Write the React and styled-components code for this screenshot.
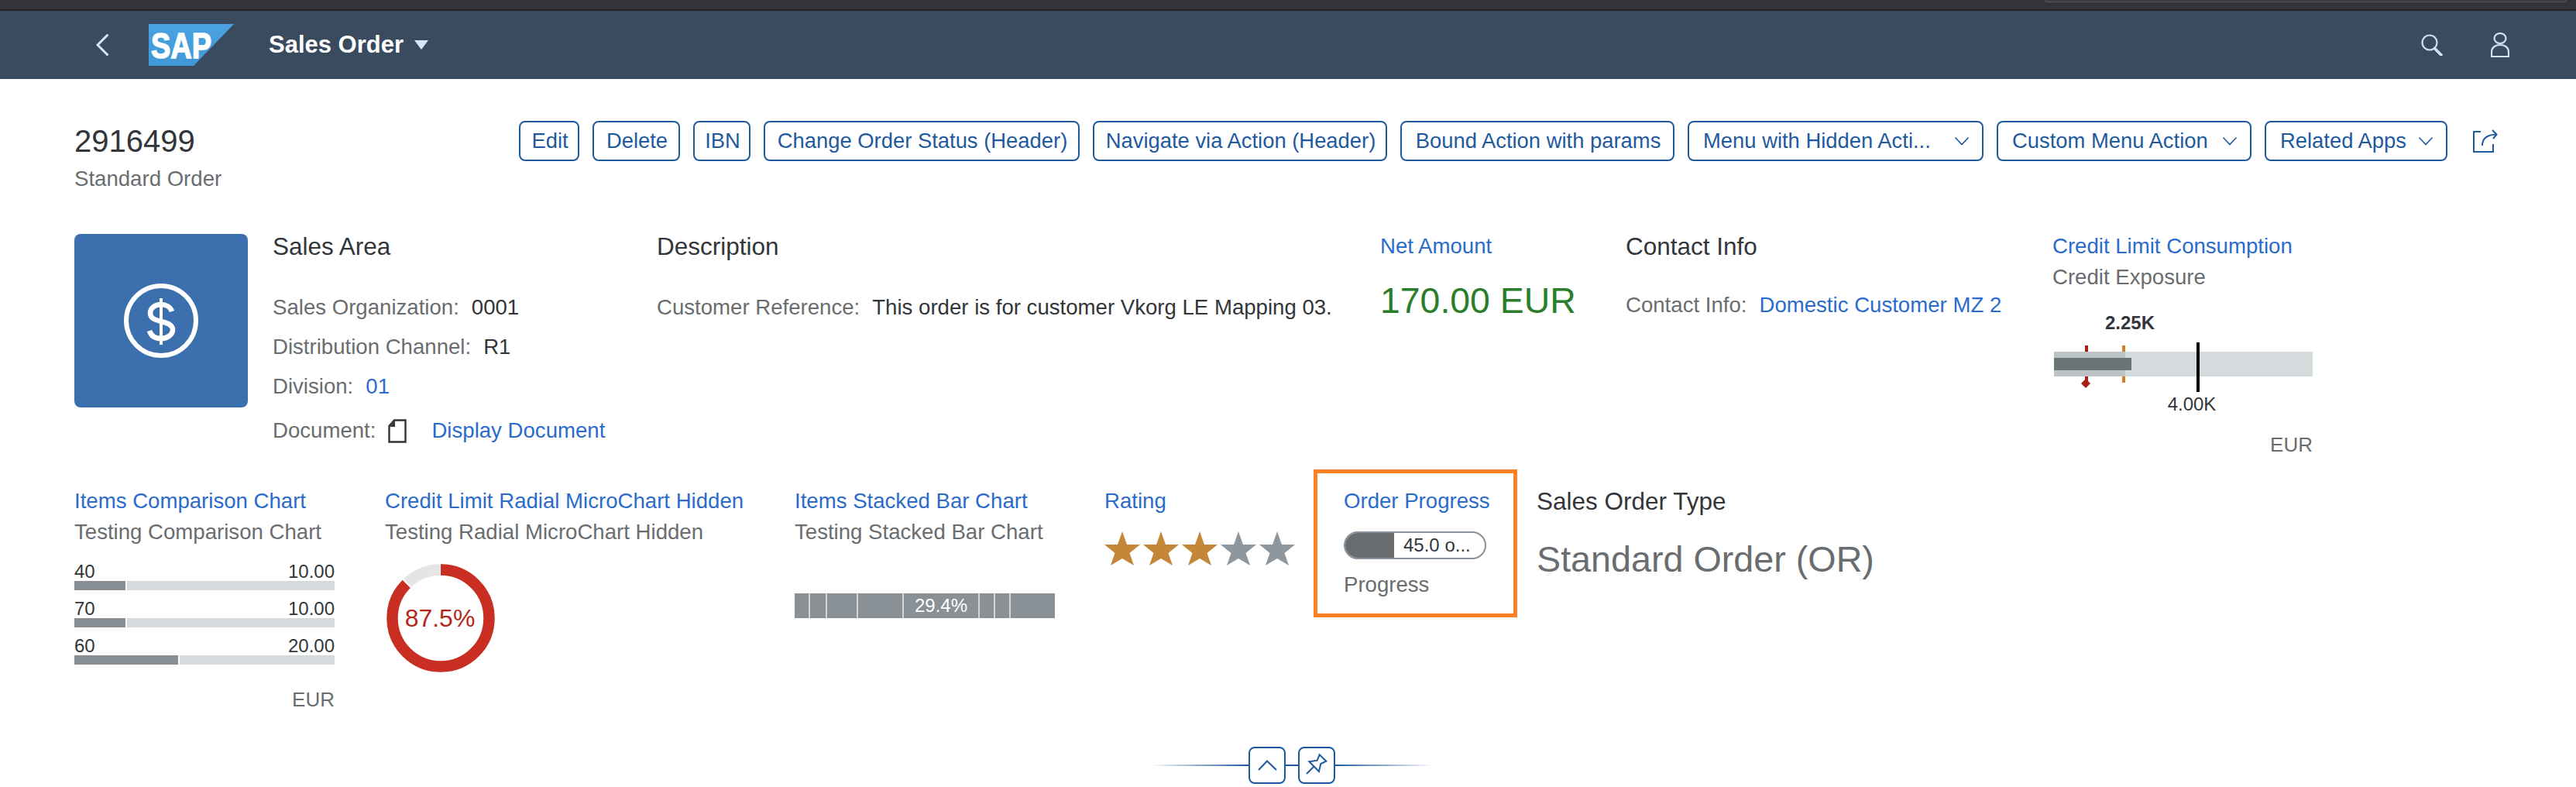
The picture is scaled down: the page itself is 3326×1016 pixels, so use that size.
import React from "react";
import styled, { createGlobalStyle } from "styled-components";

const GlobalStyle = createGlobalStyle`
  html, body {
    margin: 0;
    padding: 0;
    background: #fff;
    overflow: hidden;
  }
  body {
    font-family: "Liberation Sans", Arial, sans-serif;
    color: #32363a;
  }
`;

const Page = styled.div`
  width: 3326px;
  height: 1016px;
  overflow: hidden;
`;

const WindowEdge = styled.div`
  height: 14px;
  box-sizing: border-box;
  background: #333437;
  border-bottom: 2px solid #232427;
  display: flex;
  justify-content: flex-end;
  padding-right: 12px;
`;

const AddressBarEdge = styled.div`
  width: 674px;
  height: 3px;
  box-sizing: border-box;
  background: #3c3d41;
  border: 1px solid #55565a;
  border-top: 0;
  border-radius: 0 0 5px 5px;
`;

const Shell = styled.header`
  height: 88px;
  background: #3a4a5f;
  display: flex;
  align-items: center;
  padding: 0 86px 0 124px;
`;

const ShellTitle = styled.div`
  margin-left: 45px;
  font-size: 31px;
  font-weight: 700;
  color: #fff;
`;

const ShellCaret = styled.div`
  margin-left: 14px;
  width: 0;
  height: 0;
  border-left: 9px solid transparent;
  border-right: 9px solid transparent;
  border-top: 12px solid #d1e8ff;
`;

const ShellActions = styled.div`
  margin-left: auto;
  display: flex;
  align-items: center;
  gap: 62px;
`;

const Content = styled.main`
  padding: 54px 101px 0 96px;
`;

const TitleRow = styled.div`
  height: 142px;
  display: flex;
  justify-content: space-between;
  align-items: flex-start;
`;

const ObjectTitle = styled.div`
  font-size: 40px;
  line-height: 52px;
  color: #32363a;
`;

const ObjectSubtitle = styled.div`
  font-size: 27.6px;
  line-height: 36px;
  margin-top: 5px;
  color: #6a6d70;
`;

const Actions = styled.div`
  display: flex;
  align-items: center;
  gap: 17px;
`;

const ActionButton = styled.div`
  box-sizing: border-box;
  width: ${(p) => p.$w}px;
  height: 52px;
  padding: 0 16px 0 18px;
  display: flex;
  align-items: center;
  justify-content: ${(p) => (p.$menu ? "space-between" : "center")};
  border: 2px solid #1f5a9e;
  border-radius: 8px;
  color: #1f5a9e;
  font-size: 27.4px;
  white-space: nowrap;
`;

const ShareLink = styled.div`
  margin-left: 16px;
  display: flex;
`;

const HeaderFacets = styled.div`
  height: 308px;
  display: flex;
  align-items: flex-start;
`;

const Tile = styled.div`
  width: 224px;
  height: 224px;
  margin: 4px 32px 0 0;
  flex: none;
  background: #3c6fae;
  border-radius: 8px;
  display: flex;
  align-items: center;
  justify-content: center;
`;

const Facet = styled.section`
  width: ${(p) => p.$w}px;
  flex: none;
`;

const GroupTitle = styled.div`
  font-size: 31.5px;
  line-height: 40px;
  color: #32363a;
  white-space: nowrap;
`;

const LinkTitle = styled.div`
  font-size: 27.6px;
  line-height: 40px;
  color: #2b6bcb;
  white-space: nowrap;
`;

const SubTitle = styled.div`
  font-size: 27.6px;
  line-height: 40px;
  color: #6a6d70;
  white-space: nowrap;
`;

const FieldList = styled.div`
  margin-top: ${(p) => p.$top || 39}px;
  display: flex;
  flex-direction: column;
  gap: 11px;
`;

const Field = styled.div`
  display: flex;
  align-items: center;
  gap: 16px;
  font-size: 27.6px;
  line-height: 40px;
  white-space: nowrap;
  margin-top: ${(p) => p.$top || 0}px;
`;

const Label = styled.span`
  color: #6a6d70;
`;

const Value = styled.span`
  color: #32363a;
`;

const FieldLink = styled.span`
  color: #2b6bcb;
  margin-left: ${(p) => p.$left || 0}px;
`;

const KpiValue = styled.div`
  margin-top: 20px;
  font-size: 46.4px;
  line-height: 60px;
  color: #2b7d2b;
  white-space: nowrap;
`;

const BulletChart = styled.svg`
  display: block;
  margin-top: 20px;
`;

const Unit = styled.div`
  margin-top: ${(p) => p.$top}px;
  width: ${(p) => p.$w}px;
  text-align: right;
  font-size: 26px;
  line-height: 36px;
  color: #6a6d70;
`;

const ChartRow = styled.div`
  display: flex;
  align-items: flex-start;
`;

const ChartFacet = styled.section`
  width: ${(p) => p.$w}px;
  flex: none;
  padding-top: 21px;
`;

const Comparison = styled.div`
  width: 336px;
  margin-top: 19px;
  display: flex;
  flex-direction: column;
  gap: 12px;
`;

const CompareLabels = styled.div`
  display: flex;
  justify-content: space-between;
  font-size: 24px;
  line-height: 24px;
  color: #32363a;
`;

const CompareTrack = styled.div`
  height: 12px;
  display: flex;
  gap: 2px;
`;

const CompareFill = styled.div`
  width: ${(p) => p.$w}px;
  background: #878f94;
`;

const CompareRest = styled.div`
  flex: 1;
  background: #d5dadd;
`;

const Radial = styled.svg`
  display: block;
  margin: 21px 0 0 2px;
`;

const StackedBar = styled.div`
  width: 336px;
  height: 32px;
  margin-top: 59px;
  display: flex;
  gap: 2px;
  background: #d5d5d5;
`;

const Segment = styled.div`
  width: ${(p) => p.$w}px;
  flex: none;
  background: #899196;
  color: #fff;
  font-size: 24px;
  line-height: 32px;
  text-align: center;
`;

const Stars = styled.div`
  margin-top: 19px;
  display: flex;
  gap: 4px;
`;

const HighlightBox = styled.section`
  box-sizing: border-box;
  width: 263px;
  height: 191px;
  flex: none;
  margin-right: 25px;
  padding: 16px 0 0 34px;
  border: 5px solid #fd7e23;
`;

const Progress = styled.div`
  box-sizing: border-box;
  width: 184px;
  height: 36px;
  margin-top: 19px;
  display: flex;
  border: 2px solid #89919a;
  border-radius: 18px;
  overflow: hidden;
`;

const ProgressFill = styled.div`
  width: 63px;
  background: #6a6d70;
`;

const ProgressText = styled.div`
  padding-left: 12px;
  font-size: 24px;
  line-height: 32px;
  color: #32363a;
  white-space: nowrap;
`;

const ProgressCaption = styled.div`
  margin-top: 15px;
  font-size: 27.6px;
  line-height: 36px;
  color: #6a6d70;
`;

const BigText = styled.div`
  margin-top: 25px;
  font-size: 46.7px;
  line-height: 60px;
  color: #6a6d70;
  white-space: nowrap;
`;

const Collapse = styled.div`
  margin-top: 43px;
  padding-left: 15px;
  display: flex;
  align-items: center;
  justify-content: center;
`;

const FadeLine = styled.div`
  width: 127px;
  height: 2px;
  background: linear-gradient(
    ${(p) => (p.$left ? "to right" : "to left")},
    rgba(31, 90, 158, 0),
    #1f5a9e
  );
`;

const Connector = styled.div`
  width: 16px;
  height: 2px;
  background: #1f5a9e;
`;

const SquareButton = styled.div`
  box-sizing: border-box;
  width: 48px;
  height: 48px;
  border: 2px solid #1f5a9e;
  border-radius: 8px;
  display: flex;
`;

const BackIcon = () => (
  <svg width="16" height="28" viewBox="0 0 16 28" fill="none">
    <path d="M14.5 1.5 2 14l12.5 12.5" stroke="#d1e8ff" strokeWidth="3" strokeLinecap="round" />
  </svg>
);

const SapLogo = () => (
  <svg width="110" height="54" viewBox="0 0 110 54" style={{ marginLeft: 52 }}>
    <defs>
      <linearGradient id="sapBlue" x1="0" y1="0" x2="0" y2="1">
        <stop offset="0" stopColor="#4aa3e0" />
        <stop offset="1" stopColor="#3f97d6" />
      </linearGradient>
    </defs>
    <polygon points="0,0 110,0 58,54 0,54" fill="url(#sapBlue)" />
    <text
      x="3"
      y="44"
      fontFamily="Liberation Sans"
      fontWeight="700"
      fontSize="46"
      fill="#fff"
      stroke="#fff"
      strokeWidth="1.5"
      textLength="78"
      lengthAdjust="spacingAndGlyphs"
    >
      SAP
    </text>
  </svg>
);

const SearchIcon = () => (
  <svg width="28" height="28" viewBox="0 0 28 28" fill="none" stroke="#d1e0f5">
    <ellipse cx="11" cy="11" rx="9.5" ry="9.5" strokeWidth="2.2" />
    <path d="M17.5 18.5 26 27" strokeWidth="3.6" strokeLinecap="round" />
  </svg>
);

const UserIcon = () => (
  <svg width="24" height="32" viewBox="0 0 24 32" fill="none" stroke="#d1e0f5" strokeWidth="2.2">
    <ellipse cx="12" cy="7.5" rx="7.5" ry="6.5" />
    <path d="M1 31V25C1 19 6 16 12 16S23 19 23 25V31Z" />
  </svg>
);

const ChevronDown = () => (
  <svg width="20" height="14" viewBox="0 0 20 14" fill="none">
    <path d="M1.5 2.5 10 11.5l8.5-9" stroke="#1f5a9e" strokeWidth="1.6" />
  </svg>
);

const ShareIcon = () => (
  <svg width="32" height="30" viewBox="0 0 32 30" fill="none" stroke="#1f5a9e" strokeWidth="2">
    <path d="M10 3H1v26h25V19" />
    <path d="M12 21C12 13 17 7 30 6.5" />
    <path d="M25 1l5.5 5.5L26 12" />
  </svg>
);

const DollarIcon = () => (
  <svg width="100" height="98" viewBox="0 0 100 98" fill="none" stroke="#fff">
    <ellipse cx="50" cy="49" rx="45" ry="45" strokeWidth="6" />
    <path d="M50 20v60" strokeWidth="4" />
    <path
      d="M64 37c-2-6-8-9-14-9-8 0-14 5-14 11 0 7 6 9 14 11s15 4 15 11c0 6-7 11-15 11-7 0-13-3-15-10"
      strokeWidth="6.5"
    />
  </svg>
);

const DocumentIcon = () => (
  <svg width="24" height="31" viewBox="0 0 24 31" fill="none" style={{ flex: "none" }}>
    <path d="M8 1.5H22.5V29.5H1.5V9Z" stroke="#32363a" strokeWidth="2.4" />
    <path d="M9 2V10H2Z" fill="#32363a" />
  </svg>
);

const Star = ({ on }) => (
  <svg width="46" height="44" viewBox="0 0 46 44">
    <polygon
      points="23,0 29,17 46,17 32.5,28 38,44 23,35 8,44 13.5,28 0,17 17,17"
      fill={on ? "#c4873a" : "#8e969e"}
    />
  </svg>
);

const actions = [
  { label: "Edit", w: 78 },
  { label: "Delete", w: 113 },
  { label: "IBN", w: 74 },
  { label: "Change Order Status (Header)", w: 408 },
  { label: "Navigate via Action (Header)", w: 380 },
  { label: "Bound Action with params", w: 354 },
  { label: "Menu with Hidden Acti...", w: 382, menu: true },
  { label: "Custom Menu Action", w: 329, menu: true },
  { label: "Related Apps", w: 236, menu: true },
];

const comparison = [
  { label: "40", value: "10.00", fill: 66 },
  { label: "70", value: "10.00", fill: 66 },
  { label: "60", value: "20.00", fill: 134 },
];

const segments = [18, 20, 38, 57, 96, 18, 18, 57];

const App = () => (
  <Page>
    <GlobalStyle />
    <WindowEdge>
      <AddressBarEdge />
    </WindowEdge>
    <Shell>
      <BackIcon />
      <SapLogo />
      <ShellTitle>Sales Order</ShellTitle>
      <ShellCaret />
      <ShellActions>
        <SearchIcon />
        <UserIcon />
      </ShellActions>
    </Shell>
    <Content>
      <TitleRow>
        <div>
          <ObjectTitle>2916499</ObjectTitle>
          <ObjectSubtitle>Standard Order</ObjectSubtitle>
        </div>
        <Actions>
          {actions.map((a) => (
            <ActionButton key={a.label} $w={a.w} $menu={a.menu}>
              {a.label}
              {a.menu && <ChevronDown />}
            </ActionButton>
          ))}
          <ShareLink>
            <ShareIcon />
          </ShareLink>
        </Actions>
      </TitleRow>

      <HeaderFacets>
        <Tile>
          <DollarIcon />
        </Tile>
        <Facet $w={496}>
          <GroupTitle>Sales Area</GroupTitle>
          <FieldList>
            <Field>
              <Label>Sales Organization:</Label>
              <Value>0001</Value>
            </Field>
            <Field>
              <Label>Distribution Channel:</Label>
              <Value>R1</Value>
            </Field>
            <Field>
              <Label>Division:</Label>
              <FieldLink>01</FieldLink>
            </Field>
            <Field $top={6}>
              <Label>Document:</Label>
              <DocumentIcon />
              <FieldLink $left={16}>Display Document</FieldLink>
            </Field>
          </FieldList>
        </Facet>
        <Facet $w={934}>
          <GroupTitle>Description</GroupTitle>
          <FieldList>
            <Field>
              <Label>Customer Reference:</Label>
              <Value>This order is for customer Vkorg LE Mapping 03.</Value>
            </Field>
          </FieldList>
        </Facet>
        <Facet $w={317}>
          <LinkTitle>Net Amount</LinkTitle>
          <KpiValue>170.00 EUR</KpiValue>
        </Facet>
        <Facet $w={551}>
          <GroupTitle>Contact Info</GroupTitle>
          <FieldList $top={36}>
            <Field>
              <Label>Contact Info:</Label>
              <FieldLink>Domestic Customer MZ 2</FieldLink>
            </Field>
          </FieldList>
        </Facet>
        <Facet $w={340}>
          <LinkTitle>Credit Limit Consumption</LinkTitle>
          <SubTitle>Credit Exposure</SubTitle>
          <BulletChart width="340" height="142" viewBox="0 0 340 142">
            <rect x="2" y="56" width="334" height="32" fill="#d5dadd" />
            <rect x="2" y="56" width="92" height="32" fill="#bcc3c7" />
            <rect x="2" y="64" width="100" height="16" fill="#6a7578" />
            <rect x="42" y="48" width="4" height="8" fill="#a82015" />
            <rect x="42" y="88" width="4" height="8" fill="#a82015" />
            <polygon points="43,91 49,97 43,103 37,97" fill="#a82015" />
            <rect x="90" y="48" width="4" height="8" fill="#d97b2f" />
            <rect x="90" y="88" width="4" height="8" fill="#d97b2f" />
            <rect x="186" y="44" width="4" height="64" fill="#000" />
            <text x="100" y="27" textAnchor="middle" fontFamily="Liberation Sans" fontWeight="700" fontSize="24" fill="#32363a">
              2.25K
            </text>
            <text x="180" y="132" textAnchor="middle" fontFamily="Liberation Sans" fontSize="24" fill="#32363a">
              4.00K
            </text>
          </BulletChart>
          <Unit $top={16} $w={336}>EUR</Unit>
        </Facet>
      </HeaderFacets>

      <ChartRow>
        <ChartFacet $w={401}>
          <LinkTitle>Items Comparison Chart</LinkTitle>
          <SubTitle>Testing Comparison Chart</SubTitle>
          <Comparison>
            {comparison.map((c, i) => (
              <div key={i}>
                <CompareLabels>
                  <span>{c.label}</span>
                  <span>{c.value}</span>
                </CompareLabels>
                <CompareTrack>
                  <CompareFill $w={c.fill} />
                  <CompareRest />
                </CompareTrack>
              </div>
            ))}
          </Comparison>
          <Unit $top={27} $w={336}>EUR</Unit>
        </ChartFacet>
        <ChartFacet $w={529}>
          <LinkTitle>Credit Limit Radial MicroChart Hidden</LinkTitle>
          <SubTitle>Testing Radial MicroChart Hidden</SubTitle>
          <Radial width="140" height="140" viewBox="0 0 140 140" fill="none">
            <g transform="rotate(-90 70 70)" strokeWidth="14.5">
              <circle cx="70" cy="70" r="62.5" pathLength="100" stroke="#e5e5e5" strokeDasharray="11.8 88.2" strokeDashoffset="-88" />
              <circle cx="70" cy="70" r="62.5" pathLength="100" stroke="#c92e22" strokeDasharray="87.5 12.5" />
            </g>
            <text x="69" y="81" textAnchor="middle" fontFamily="Liberation Sans" fontSize="32" fill="#b5261a">
              87.5%
            </text>
          </Radial>
        </ChartFacet>
        <ChartFacet $w={400}>
          <LinkTitle>Items Stacked Bar Chart</LinkTitle>
          <SubTitle>Testing Stacked Bar Chart</SubTitle>
          <StackedBar>
            {segments.map((w, i) => (
              <Segment key={i} $w={w}>
                {i === 4 ? "29.4%" : ""}
              </Segment>
            ))}
          </StackedBar>
        </ChartFacet>
        <ChartFacet $w={270}>
          <LinkTitle>Rating</LinkTitle>
          <Stars>
            {[1, 2, 3, 4, 5].map((n) => (
              <Star key={n} on={n <= 3} />
            ))}
          </Stars>
        </ChartFacet>
        <HighlightBox>
          <LinkTitle>Order Progress</LinkTitle>
          <Progress>
            <ProgressFill />
            <ProgressText>45.0 o...</ProgressText>
          </Progress>
          <ProgressCaption>Progress</ProgressCaption>
        </HighlightBox>
        <ChartFacet $w={500}>
          <GroupTitle>Sales Order Type</GroupTitle>
          <BigText>Standard Order (OR)</BigText>
        </ChartFacet>
      </ChartRow>

      <Collapse>
        <FadeLine $left />
        <SquareButton>
          <svg width="44" height="44" viewBox="0 0 44 44" fill="none">
            <path d="M11 28 22 16.5 34 28" stroke="#1f5a9e" strokeWidth="2" />
          </svg>
        </SquareButton>
        <Connector />
        <SquareButton>
          <svg width="44" height="44" viewBox="0 0 44 44" fill="none" stroke="#1f5a9e" strokeWidth="2">
            <path d="M12.3 17.3 22.7 15.7 25.7 8.3 34.3 16.7 27.3 20 25 30Z" />
            <path d="M9 33 19 23" />
          </svg>
        </SquareButton>
        <FadeLine />
      </Collapse>
    </Content>
  </Page>
);

export default App;
